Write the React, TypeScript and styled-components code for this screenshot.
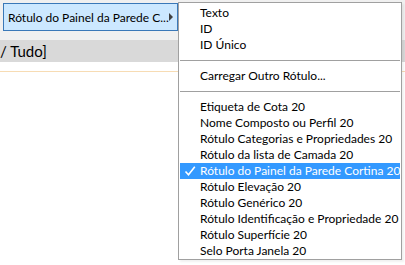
import styled, { createGlobalStyle } from "styled-components";

const GlobalStyle = createGlobalStyle`
  html, body {
    margin: 0;
    padding: 0;
    background: #ffffff;
  }
  body {
    font-family: Lato, "Noto Sans", sans-serif;
    font-size: 12px;
    color: #000000;
  }
`;

type Entry =
  | { kind: "item"; label: string; checked?: boolean }
  | { kind: "separator" };

const entries: Entry[] = [
  { kind: "item", label: "Texto" },
  { kind: "item", label: "ID" },
  { kind: "item", label: "ID Único" },
  { kind: "separator" },
  { kind: "item", label: "Carregar Outro Rótulo..." },
  { kind: "separator" },
  { kind: "item", label: "Etiqueta de Cota 20" },
  { kind: "item", label: "Nome Composto ou Perfil 20" },
  { kind: "item", label: "Rótulo Categorias e Propriedades 20" },
  { kind: "item", label: "Rótulo da lista de Camada 20" },
  { kind: "item", label: "Rótulo do Painel da Parede Cortina 20", checked: true },
  { kind: "item", label: "Rótulo Elevação 20" },
  { kind: "item", label: "Rótulo Genérico 20" },
  { kind: "item", label: "Rótulo Identificação e Propriedade 20" },
  { kind: "item", label: "Rótulo Superfície 20" },
  { kind: "item", label: "Selo Porta Janela 20" },
];

export default function App() {
  return (
    <Page>
      <GlobalStyle />
      <Toolbar>
        <DropButton>
          <span>Rótulo do Painel da Parede C...</span>
          <Arrow />
        </DropButton>
      </Toolbar>
      <PathBand>/ Tudo]</PathBand>
      <Canvas />
      <Menu>
        {entries.map((e, i) =>
          e.kind === "separator" ? (
            <Separator key={i} />
          ) : (
            <MenuItem key={i} $active={!!e.checked}>
              {e.checked && (
                <Check viewBox="0 0 12 12">
                  <path d="M1.5 6.5 L4.5 9.8 L10.8 1.8" />
                </Check>
              )}
              {e.label}
            </MenuItem>
          )
        )}
      </Menu>
    </Page>
  );
}

const Page = styled.div`
  position: relative;
  width: 405px;
  height: 265px;
  overflow: hidden;
  background: #ffffff;
`;

const Toolbar = styled.div`
  height: 40px;
  background: #f0f0f0;
  padding: 3px 0 0 3px;
  box-sizing: border-box;
`;

const DropButton = styled.div`
  display: flex;
  align-items: center;
  justify-content: space-between;
  width: 175px;
  height: 28px;
  box-sizing: border-box;
  padding: 0 4px 0 4px;
  background: #cce8ff;
  border: 1px solid #3a78b8;
  white-space: nowrap;
`;

const Arrow = styled.span`
  width: 0;
  height: 0;
  border-top: 4px solid transparent;
  border-bottom: 4px solid transparent;
  border-left: 4px solid #404040;
`;

const PathBand = styled.div`
  height: 22px;
  line-height: 22px;
  background: #d9d9d9;
  padding-left: 0;
  font-size: 15px;
`;

const Canvas = styled.div`
  margin-top: 9px;
  border-top: 1px solid #f7dcb4;
`;

const Menu = styled.div`
  position: absolute;
  left: 178px;
  top: 2px;
  width: 224px;
  box-sizing: border-box;
  padding: 2px 1px 0 1px;
  background: #ffffff;
  border: 1px solid #a0a0a0;
  box-shadow: 2px 2px 2px rgba(0, 0, 0, 0.06);
  display: flex;
  flex-direction: column;
`;

const MenuItem = styled.div<{ $active: boolean }>`
  position: relative;
  height: 16px;
  line-height: 16px;
  padding-left: 20px;
  white-space: nowrap;
  background: ${(p) => (p.$active ? "#3399ff" : "transparent")};
  color: ${(p) => (p.$active ? "#ffffff" : "#000000")};
`;

const Check = styled.svg`
  position: absolute;
  left: 4px;
  top: 2px;
  width: 12px;
  height: 12px;
  fill: none;
  stroke: #ffffff;
  stroke-width: 1.6;
`;

const Separator = styled.div`
  height: 1px;
  margin: 7px 0;
  background: #a0a0a0;
`;
